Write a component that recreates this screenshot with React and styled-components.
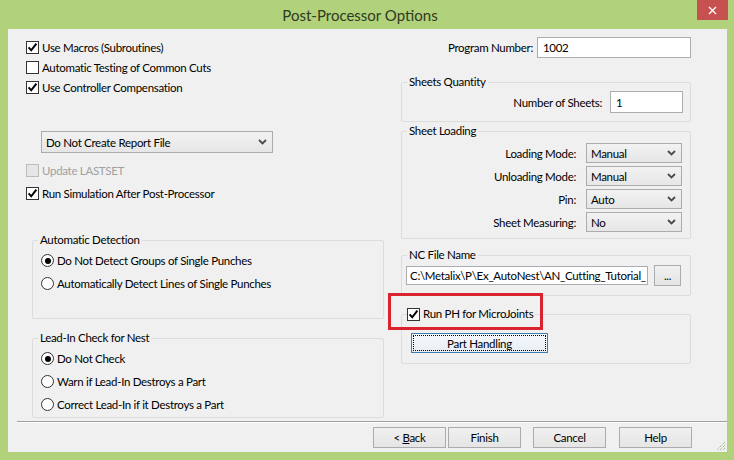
import React from 'react';
import styled, { createGlobalStyle } from 'styled-components';

const FONT = `Lato, "Noto Sans", "Liberation Sans", sans-serif`;

const Global = createGlobalStyle`
  html, body { margin: 0; padding: 0; }
  body {
    width: 734px; height: 460px; overflow: hidden;
    background: #b1d17b;
    font-family: ${FONT};
    font-size: 11.5px;
    letter-spacing: -0.3px;
    color: #000;
  }
  *, *::before, *::after { box-sizing: border-box; }
`;

const Window = styled.div`
  width: 734px;
  height: 460px;
  display: flex;
  flex-direction: column;
  background: #b1d17b;
`;

const TitleBar = styled.div`
  height: 29px;
  flex: none;
  display: flex;
  align-items: flex-start;
`;

const Title = styled.div`
  flex: 1;
  padding-left: 23px;
  text-align: center;
  font-size: 15px;
  letter-spacing: 0;
  line-height: 30px;
  color: #2f3a22;
`;

const CloseButton = styled.div`
  width: 31px;
  height: 20px;
  margin-right: 6px;
  background: #c75050;
  display: flex;
  align-items: center;
  justify-content: center;
`;

const Client = styled.div`
  flex: 1;
  margin: 0 7px 8px 8px;
  background: #f0f0f0;
  position: relative;
  display: flex;
  flex-direction: column;
`;

const Body = styled.div`
  height: 392px;
  flex: none;
  display: grid;
  grid-template-columns: 377px 1fr;
`;

const LeftCol = styled.div`
  padding: 8px 0 0 18px;
  display: flex;
  flex-direction: column;
  align-items: flex-start;
`;

const RightCol = styled.div`
  padding-top: 8px;
  display: flex;
  flex-direction: column;
  align-items: flex-start;
`;

const CheckRow = styled.label`
  display: flex;
  align-items: center;
  gap: 3px;
  height: ${p => p.$h || 20}px;
  margin-top: ${p => p.$mt || 0}px;
  color: ${p => (p.$disabled ? '#a0a0a0' : '#000')};
  white-space: nowrap;
`;

const Box = styled.span`
  width: 13px;
  height: 13px;
  flex: none;
  border: 1px solid ${p => (p.$disabled ? '#bcbcbc' : '#333')};
  background: ${p => (p.$disabled ? '#e6e6e6' : '#fff')};
  display: flex;
  align-items: center;
  justify-content: center;
`;

const Check = ({ checked, disabled }) => (
  <Box $disabled={disabled}>
    {checked && (
      <svg width="11" height="11" viewBox="0 0 11 11">
        <path d="M1.6 5.4 L4.2 8.3 L9.4 1.6" fill="none" stroke="#000" strokeWidth="2" />
      </svg>
    )}
  </Box>
);

const Select = styled.div`
  width: ${p => p.$w}px;
  height: ${p => p.$h || 20}px;
  margin-top: ${p => p.$mt || 0}px;
  margin-left: ${p => p.$ml || 0}px;
  flex: none;
  border: 1px solid #acacac;
  background: linear-gradient(#f2f2f2, #e6e6e6);
  display: flex;
  align-items: center;
  justify-content: space-between;
  padding: 0 5px 0 4px;
  white-space: nowrap;
`;

const Chevron = () => (
  <svg width="9" height="6" viewBox="0 0 9 6">
    <path d="M1 1 L4.5 4.5 L8 1" fill="none" stroke="#4a4a4a" strokeWidth="1.8" />
  </svg>
);

const Dropdown = ({ value, ...rest }) => (
  <Select {...rest}>
    <span>{value}</span>
    <Chevron />
  </Select>
);

const GroupBox = styled.fieldset`
  margin: ${p => p.$mt || 0}px 0 0 ${p => p.$ml || 0}px;
  padding: 0;
  width: ${p => p.$w}px;
  height: ${p => p.$h}px;
  border: 1px solid #dcdcdc;
  border-radius: 2px;
  min-inline-size: 0;
  display: flex;
  flex-direction: column;
`;

const Legend = styled.legend`
  margin-left: 5px;
  padding: ${p => p.$pad || '0 2px'};
  line-height: 16px;
  height: 16px;
  color: #000;
`;

const RadioList = styled.div`
  padding: 1px 0 0 8px;
  display: flex;
  flex-direction: column;
`;

const RadioRow = styled.label`
  height: 23px;
  display: flex;
  align-items: center;
  gap: 3px;
  white-space: nowrap;
`;

const Circle = styled.span`
  width: 13px;
  height: 13px;
  flex: none;
  border-radius: 50%;
  border: 1px solid #333;
  background: #fff;
  display: flex;
  align-items: center;
  justify-content: center;
  &::after {
    content: '';
    width: 6px;
    height: 6px;
    border-radius: 50%;
    background: ${p => (p.$on ? '#000' : 'transparent')};
  }
`;

const Radio = ({ on, children }) => (
  <RadioRow>
    <Circle $on={on} />
    <span>{children}</span>
  </RadioRow>
);

const FormRow = styled.div`
  align-self: stretch;
  display: flex;
  justify-content: flex-end;
  align-items: center;
  gap: ${p => p.$gap || 8}px;
  padding-right: ${p => p.$pr || 0}px;
  margin-top: ${p => p.$mt || 0}px;
  white-space: nowrap;
`;

const FormStack = styled.div`
  display: flex;
  flex-direction: column;
  gap: 3px;
  padding: 4px 8px 0 0;
`;

const TextBox = styled.div`
  width: ${p => p.$w}px;
  height: ${p => p.$h}px;
  flex: none;
  background: #fff;
  border: 1px solid #abadb3;
  padding-left: ${p => p.$pl || 5}px;
  display: flex;
  align-items: center;
  overflow: hidden;
  white-space: nowrap;
`;

const FileRow = styled.div`
  display: flex;
  align-items: flex-start;
  gap: 6px;
  padding: 3px 0 0 4px;
`;

const Button = styled.div`
  width: ${p => p.$w || 73}px;
  height: ${p => p.$h || 21}px;
  margin-top: ${p => p.$mt || 0}px;
  margin-left: ${p => p.$ml || 0}px;
  flex: none;
  border: 1px solid ${p => (p.$focus ? '#3c7fb1' : '#acacac')};
  background: ${p => (p.$focus ? 'linear-gradient(#f4f8fb, #e8eef3)' : 'linear-gradient(#f0f0f0, #e5e5e5)')};
  outline: ${p => (p.$focus ? '1px dotted #000' : 'none')};
  outline-offset: -3px;
  display: flex;
  align-items: center;
  justify-content: center;
  white-space: nowrap;
`;

const PHInner = styled.div`
  padding: 11px 0 0 9px;
`;

const Separator = styled.div`
  margin-left: 9px;
  height: 2px;
  border-top: 1px solid #a0a0a0;
  border-bottom: 1px solid #fdfdfd;
`;

const ButtonBar = styled.div`
  display: flex;
  justify-content: flex-end;
  padding-right: 35px;
  margin-top: 4px;
`;

const Highlight = styled.div`
  position: absolute;
  left: 380px;
  top: 264px;
  width: 155px;
  height: 37px;
  border: 3px solid #d9232e;
`;

const Grip = styled.div`
  position: absolute;
  right: 1px;
  bottom: 1px;
  width: 12px;
  height: 12px;
`;

export default function App() {
  return (
    <>
      <Global />
      <Window>
        <TitleBar>
          <Title>Post-Processor Options</Title>
          <CloseButton>
            <svg width="9" height="9" viewBox="0 0 9 9">
              <path d="M1 1 L8 8 M8 1 L1 8" stroke="#fff" strokeWidth="1.4" />
            </svg>
          </CloseButton>
        </TitleBar>
        <Client>
          <Body>
            <LeftCol>
              <CheckRow>
                <Check checked />
                <span>Use Macros (Subroutines)</span>
              </CheckRow>
              <CheckRow>
                <Check />
                <span>Automatic Testing of Common Cuts</span>
              </CheckRow>
              <CheckRow>
                <Check checked />
                <span>Use Controller Compensation</span>
              </CheckRow>
              <Dropdown value="Do Not Create Report File" $w={232} $h={22} $mt={34} $ml={15} />
              <CheckRow $mt={7} $disabled>
                <Check disabled />
                <span>Update LASTSET</span>
              </CheckRow>
              <CheckRow $mt={3}>
                <Check checked />
                <span>Run Simulation After Post-Processor</span>
              </CheckRow>
              <GroupBox $mt={29} $ml={6} $w={352} $h={87}>
                <Legend>Automatic Detection</Legend>
                <RadioList>
                  <Radio on>Do Not Detect Groups of Single Punches</Radio>
                  <Radio>Automatically Detect Lines of Single Punches</Radio>
                </RadioList>
              </GroupBox>
              <GroupBox $mt={11} $ml={6} $w={352} $h={88}>
                <Legend>Lead-In Check for Nest</Legend>
                <RadioList>
                  <Radio on>Do Not Check</Radio>
                  <Radio>Warn if Lead-In Destroys a Part</Radio>
                  <Radio>Correct Lead-In if it Destroys a Part</Radio>
                </RadioList>
              </GroupBox>
            </LeftCol>
            <RightCol>
              <FormRow $gap={4} $pr={36}>
                <span>Program Number:</span>
                <TextBox $w={154} $h={21}>1002</TextBox>
              </FormRow>
              <GroupBox $mt={16} $ml={16} $w={290} $h={48}>
                <Legend>Sheets Quantity</Legend>
                <FormRow $pr={7} $mt={1}>
                  <span>Number of Sheets:</span>
                  <TextBox $w={73} $h={22}>1</TextBox>
                </FormRow>
              </GroupBox>
              <GroupBox $mt={1} $ml={16} $w={290} $h={116}>
                <Legend>Sheet Loading</Legend>
                <FormStack>
                  <FormRow $gap={10}>
                    <span>Loading Mode:</span>
                    <Dropdown value="Manual" $w={96} />
                  </FormRow>
                  <FormRow $gap={10}>
                    <span>Unloading Mode:</span>
                    <Dropdown value="Manual" $w={96} />
                  </FormRow>
                  <FormRow $gap={10}>
                    <span>Pin:</span>
                    <Dropdown value="Auto" $w={96} />
                  </FormRow>
                  <FormRow $gap={10}>
                    <span>Sheet Measuring:</span>
                    <Dropdown value="No" $w={96} />
                  </FormRow>
                </FormStack>
              </GroupBox>
              <GroupBox $mt={8} $ml={16} $w={290} $h={49}>
                <Legend>NC File Name</Legend>
                <FileRow>
                  <TextBox $w={242} $h={19} $pl={3}>C:\Metalix\P\Ex_AutoNest\AN_Cutting_Tutorial_</TextBox>
                  <Button $w={27} $h={21} $mt={-1}>...</Button>
                </FileRow>
              </GroupBox>
              <GroupBox $mt={10} $ml={16} $w={290} $h={58}>
                <Legend $pad="0 2px 0 0">
                  <CheckRow $h={16}>
                    <Check checked />
                    <span>Run PH for MicroJoints</span>
                  </CheckRow>
                </Legend>
                <PHInner>
                  <Button $w={137} $h={20} $focus>Part Handling</Button>
                </PHInner>
              </GroupBox>
            </RightCol>
          </Body>
          <Separator />
          <ButtonBar>
            <Button>
              <span>&lt; <u>B</u>ack</span>
            </Button>
            <Button $ml={2}>Finish</Button>
            <Button $ml={12}>Cancel</Button>
            <Button $ml={13}>Help</Button>
          </ButtonBar>
          <Highlight />
          <Grip>
            <svg width="12" height="12" viewBox="0 0 12 12">
              <path d="M11 3 L3 11 M11 6 L6 11 M11 9 L9 11" stroke="#8aa860" strokeWidth="1" strokeDasharray="1 1" />
            </svg>
          </Grip>
        </Client>
      </Window>
    </>
  );
}
